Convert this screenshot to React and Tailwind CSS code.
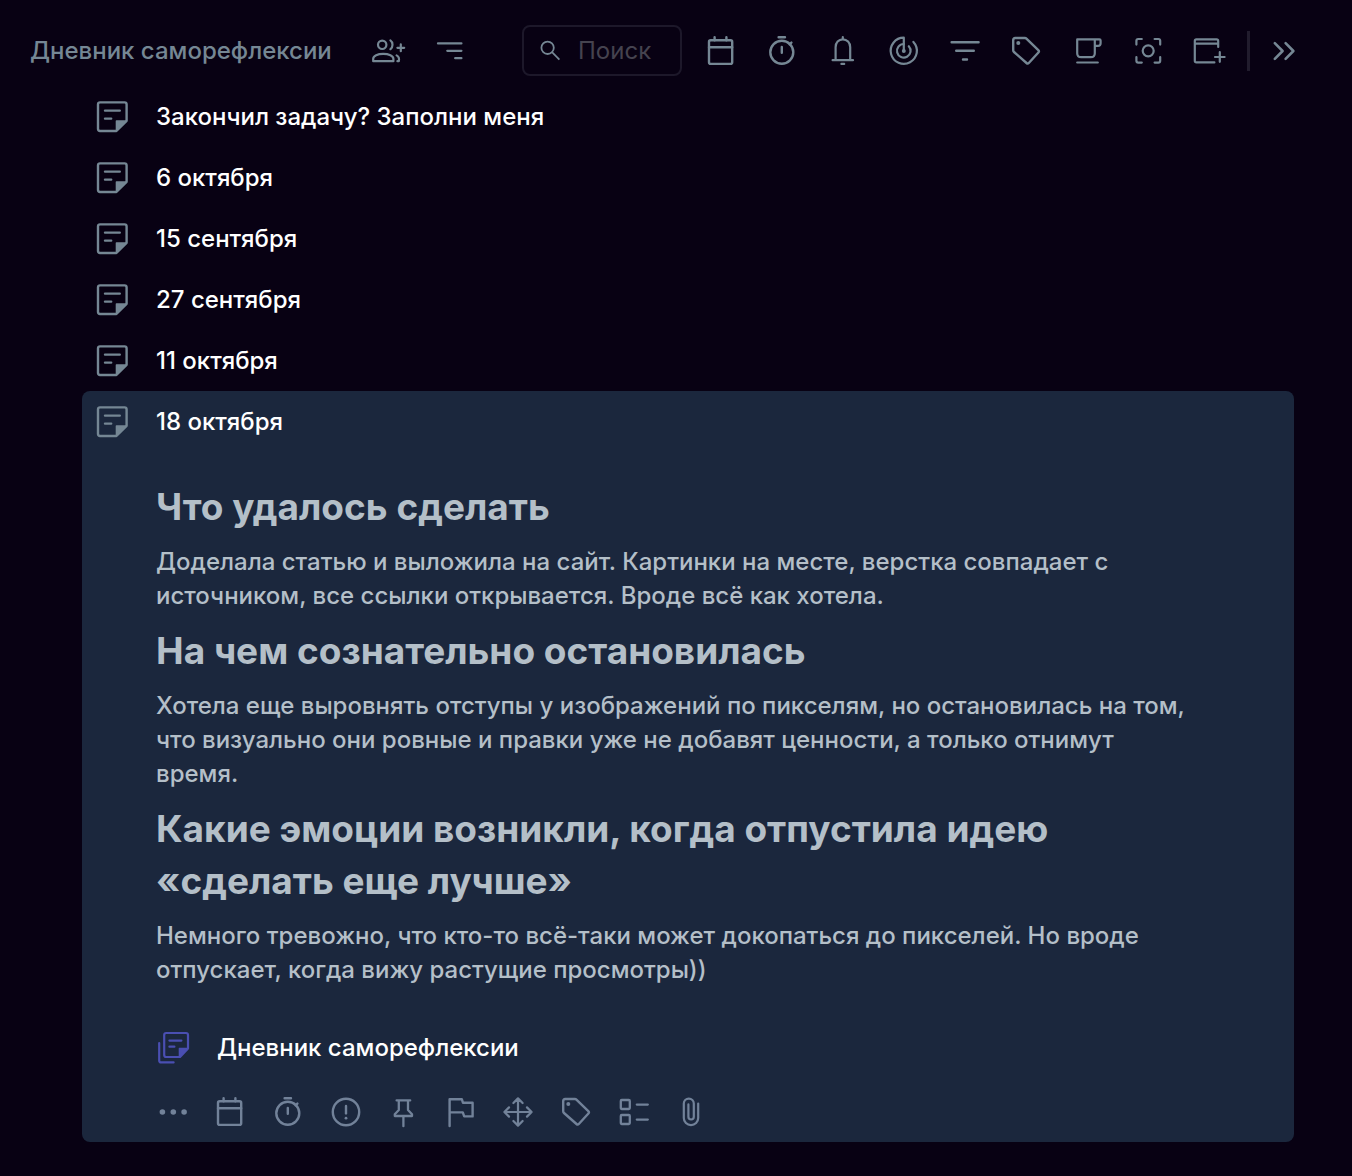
import { Fragment, useState } from "react";
import clsx from "clsx";

function Icon({ children, className, stroke = 2.4 }) {
  return (
    <svg
      viewBox="0 0 32 32"
      className={clsx("size-8 shrink-0 overflow-visible", className)}
      fill="none"
      stroke="currentColor"
      strokeWidth={stroke}
      strokeLinecap="round"
      strokeLinejoin="round"
      aria-hidden="true"
    >
      {children}
    </svg>
  );
}

const dot = { fill: "currentColor", stroke: "none" };

const icons = {
  share: (
    <Icon stroke={2.2}>
      <circle cx="10.2" cy="9.8" r="4.2" />
      <path d="M1.2 26.2v-2.4c0-3 4.4-5 10-5s10.2 2 10.2 5v2.4z" />
      <path d="M18.4 5.4c2.8 1.8 2.8 7 0 8.8M24.6 20.4c2.6 1.4 2.8 3.4 2.2 5.8h-1.4" />
      <path d="M28.8 9.4v6.8M25.4 12.8h6.8" />
    </Icon>
  ),
  sort: (
    <Icon stroke={2.3}>
      <path d="M4 8.4h23.4M13.3 15.8h14.1M21.2 23.2h6.2" />
    </Icon>
  ),
  calendar: (
    <Icon>
      <rect x="4" y="5.3" width="23.2" height="23.6" rx="1.6" />
      <path d="M4 12.2h23.2M9.6 2.2v3M21.4 2.2v3" />
    </Icon>
  ),
  timer: (
    <Icon>
      <circle cx="15.8" cy="17.2" r="11.5" />
      <path d="M12.6 2.2h6.4M15.8 12v5.8M23.6 9.4l1.8-1.8" />
    </Icon>
  ),
  bell: (
    <Icon stroke={2.2}>
      <path d="M5.6 25.2h20.4M8.6 25V12.2c0-4.6 3-7.8 7.2-7.8s7.4 3.2 7.4 7.8V25M15.8 2.2v2M14.4 28.9h2.8" />
    </Icon>
  ),
  radar: (
    <Icon stroke={2.2}>
      <path d="M15.8 15.8V2.7a13.1 13.1 0 1 0 9.6 4.2" />
      <path d="M15.8 9a6.8 6.8 0 1 0 5 2.2" />
      <circle cx="15.8" cy="16" r="2" {...dot} />
    </Icon>
  ),
  filter: (
    <Icon>
      <path d="M2.6 7.2h27M7.2 15.8h17.6M14 24.5h4" />
    </Icon>
  ),
  tag: (
    <Icon>
      <path d="M5.2 3h9.7q.9 0 1.5.6l11.9 11.5q1.2 1.2.1 2.4L18.8 28q-1.1 1.1-2.3 0L4 17q-.8-.7-.8-1.7V5q0-2 2-2z" />
      <circle cx="8.3" cy="7.9" r="2" {...dot} />
    </Icon>
  ),
  cup: (
    <Icon stroke={2.2}>
      <path d="M6.2 4.4h22.2q1.2 0 1.2 1.2v2.6q0 2.6-2.6 2.6h-3.2M23.8 4.4v13.8q0 4-4 4h-9.6q-4 0-4-4V4.4M6.2 27.5h20.6" />
    </Icon>
  ),
  focus: (
    <Icon stroke={2.2}>
      <circle cx="16.2" cy="15.8" r="5.5" />
      <path d="M4.4 9.6V5.8q0-1.8 1.8-1.8h3.6M22.6 4h3.8q1.8 0 1.8 1.8v3.8M28.2 22v3.8q0 1.8-1.8 1.8h-3.8M9.8 27.6H6.2q-1.8 0-1.8-1.8V22" />
    </Icon>
  ),
  windowPlus: (
    <Icon stroke={2.2}>
      <path d="M25.2 12V6q0-1.6-1.6-1.6H3.4Q1.8 4.4 1.8 6v19.8q0 1.6 1.6 1.6h18M1.8 8.6h23.4M26.8 17.2v9.6M22 22h9.6" />
    </Icon>
  ),
  more: (
    <Icon stroke={2.6}>
      <path d="M6.8 8.2l7.8 7.8-7.8 7.8M17.6 8.2l7.8 7.8-7.8 7.8" />
    </Icon>
  ),
  note: (
    <Icon>
      <path d="M20.4 30H4q-2 0-2-2V3.4q0-2 2-2h24.6q2 0 2 2v16.4z" />
      <path d="M9 9.6h14.8M9 17.6h6.2" />
      <path d="M20.4 20h9.8l-9.8 9.6z" fill="currentColor" strokeWidth="1.4" />
    </Icon>
  ),
  notes: (
    <Icon stroke={2.2}>
      <path d="M22 25H8.2Q6.2 25 6.2 23V3q0-2 2-2H28q2 0 2 2v13.4z" />
      <path d="M11.4 8.6h12M11.4 14.7h5M1.2 11v17.4q0 2 2 2h12.4" />
      <path d="M21.4 16.4h8.2l-8.2 8.2z" fill="currentColor" strokeWidth="1.4" />
    </Icon>
  ),
  dots: (
    <Icon>
      <circle cx="5.4" cy="16" r="2.8" {...dot} />
      <circle cx="16.3" cy="16" r="2.8" {...dot} />
      <circle cx="27.1" cy="16" r="2.8" {...dot} />
    </Icon>
  ),
  alert: (
    <Icon>
      <circle cx="16" cy="16" r="13.2" />
      <path d="M16 10v7.4" />
      <circle cx="16" cy="22.2" r="1.4" {...dot} />
    </Icon>
  ),
  pin: (
    <Icon stroke={2.3}>
      <path d="M9.6 4.4h13.6M11.8 4.4V14l-4 4.2v1.8h17.2v-1.8l-4-4.2V4.4M16.4 20.2v10" />
    </Icon>
  ),
  flag: (
    <Icon>
      <path d="M4.6 30V3.2h12.2l1.2 3.6h9.6v13.6h-8.4l-1.4-4H4.6" />
    </Icon>
  ),
  move: (
    <Icon stroke={2.2}>
      <path d="M16 2.4v27.2M2.4 16h27.2M11.4 7L16 2.4 20.6 7M11.4 25l4.6 4.6 4.6-4.6M7 11.4L2.4 16 7 20.6M25 11.4l4.6 4.6-4.6 4.6" />
    </Icon>
  ),
  checklist: (
    <Icon stroke={2.3}>
      <rect x="2.8" y="4" width="9" height="9" rx="1" />
      <rect x="2.8" y="19" width="9" height="9" rx="1" />
      <path d="M18.8 8.6h11M18.8 23.6h11" />
    </Icon>
  ),
  clip: (
    <Icon stroke={2.2}>
      <path d="M23.2 7.6V22a7.2 7.2 0 0 1-14.4 0V7.6a5 5 0 0 1 10 0V20.8a2.7 2.7 0 0 1-5.4 0V8.4" />
    </Icon>
  ),
};

const headerTools = [
  ["calendar", "Календарь"],
  ["timer", "Таймер"],
  ["bell", "Уведомления"],
  ["radar", "Цели"],
  ["filter", "Фильтр"],
  ["tag", "Теги"],
  ["cup", "Перерыв"],
  ["focus", "Фокус"],
  ["windowPlus", "Новое окно"],
];

const noteTools = [
  ["dots", "Ещё"],
  ["calendar", "Дата"],
  ["timer", "Таймер"],
  ["alert", "Приоритет"],
  ["pin", "Закрепить"],
  ["flag", "Флаг"],
  ["move", "Переместить"],
  ["tag", "Теги"],
  ["checklist", "Чек-лист"],
  ["clip", "Вложение"],
];

const notes = [
  "Закончил задачу? Заполни меня",
  "6 октября",
  "15 сентября",
  "27 сентября",
  "11 октября",
];

const sections = [
  {
    title: "Что удалось сделать",
    text: "Доделала статью и выложила на сайт. Картинки на месте, верстка совпадает с источником, все ссылки открывается. Вроде всё как хотела.",
  },
  {
    title: "На чем сознательно остановилась",
    text: "Хотела еще выровнять отступы у изображений по пикселям, но остановилась на том, что визуально они ровные и правки уже не добавят ценности, а только отнимут время.",
  },
  {
    title: "Какие эмоции возникли, когда отпустила идею «сделать еще лучше»",
    text: "Немного тревожно, что кто-то всё-таки может докопаться до пикселей. Но вроде отпускает, когда вижу растущие просмотры))",
  },
];

function IconButton({ name, label, className }) {
  return (
    <button type="button" aria-label={label} className={clsx("flex items-center justify-center", className)}>
      {icons[name]}
    </button>
  );
}

function NoteRow({ title }) {
  return (
    <a href="#note" className="flex h-[61px] items-center gap-[28px] px-[14px] text-2xl font-medium text-white">
      <span className="text-[#758794]">{icons.note}</span>
      <span className="pt-px">{title}</span>
    </a>
  );
}

export default function App() {
  const [query, setQuery] = useState("");

  return (
    <div className="min-h-screen bg-[#080113] pb-[34px] font-['Inter','Liberation_Sans',sans-serif]">
      <header className="flex items-center pt-[25px] pr-10 pb-[10px] pl-[30px] text-[#758794]">
        <h1 className="text-2xl font-medium whitespace-nowrap">Дневник саморефлексии</h1>
        <IconButton name="share" label="Поделиться" className="ml-[25px] h-10 w-[62px]" />
        <IconButton name="sort" label="Сортировка" className="h-10 w-[62px]" />

        <label className="mr-2 ml-auto flex h-[51px] w-[160px] items-center gap-4 rounded-lg border-2 border-[#1d182a] px-[14px]">
          <svg viewBox="0 0 24 24" className="size-6 shrink-0" fill="none" stroke="currentColor" strokeWidth="1.8" aria-hidden="true">
            <circle cx="9.6" cy="8.8" r="6.2" />
            <path d="M14 13.2l7.4 7.4" />
          </svg>
          <input
            type="text"
            aria-label="Поиск"
            placeholder="Поиск"
            value={query}
            onChange={(e) => setQuery(e.target.value)}
            className="w-full min-w-0 bg-transparent text-2xl text-white outline-none placeholder:text-[#45434f]"
          />
        </label>

        <nav className="flex">
          {headerTools.map(([name, label]) => (
            <IconButton key={name} name={name} label={label} className="h-10 w-[61px]" />
          ))}
        </nav>
        <div className="mr-[6px] ml-2 h-10 w-[3px] bg-[#211c2d]" />
        <IconButton name="more" label="Показать ещё" className="h-10 w-14" />
      </header>

      <main className="mr-[58px] ml-[82px]">
        {notes.map((title) => (
          <NoteRow key={title} title={title} />
        ))}

        {/* Opened note */}
        <article className="rounded-lg bg-[#1b273d]">
          <NoteRow title="18 октября" />

          <div className="flex flex-col gap-3 pt-[29px] pr-[100px] pl-[74px] text-[#b4bfc8]">
            {sections.map(({ title, text }) => (
              <Fragment key={title}>
                <h2 className="text-[37px] leading-[52px] font-bold">{title}</h2>
                <p className="text-2xl leading-[34px] font-medium">{text}</p>
              </Fragment>
            ))}
          </div>

          <a href="#list" className="mt-[30px] flex h-[61px] items-center gap-[27px] px-[76px] text-2xl font-medium text-white">
            <span className="text-[#4a4fb2]">{icons.notes}</span>
            <span className="pt-px">Дневник саморефлексии</span>
          </a>

          <div className="flex h-16 max-w-[638px] items-center pt-1 pl-[62px] text-[#728299]">
            {noteTools.map(([name, label]) => (
              <IconButton key={name} name={name} label={label} className="h-10 flex-1" />
            ))}
          </div>
        </article>
      </main>
    </div>
  );
}
